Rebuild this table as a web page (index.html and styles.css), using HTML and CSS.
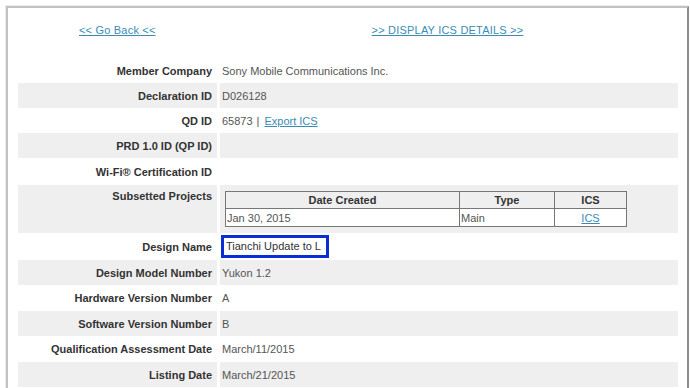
FILE: index.html
```html
<!DOCTYPE html>
<html>
<head>
<meta charset="utf-8">
<link rel="stylesheet" href="styles.css">
</head>
<body>
<div class="frame">
  <div class="toplinks">
    <a href="#">&lt;&lt; Go Back &lt;&lt;</a>
    <a href="#">&gt;&gt; DISPLAY ICS DETAILS &gt;&gt;</a>
  </div>
  <div class="details">
    <div class="row h25"><div class="lbl">Member Company</div><div class="val">Sony Mobile Communications Inc.</div></div>
    <div class="row h25 alt"><div class="lbl">Declaration ID</div><div class="val">D026128</div></div>
    <div class="row h25"><div class="lbl">QD ID</div><div class="val">65873<span class="sep">|</span><a href="#">Export ICS</a></div></div>
    <div class="row h25 alt"><div class="lbl">PRD 1.0 ID (QP ID)</div><div class="val"></div></div>
    <div class="row h27"><div class="lbl">Wi-Fi® Certification ID</div><div class="val"></div></div>
    <div class="row sub alt"><div class="lbl top">Subsetted Projects</div>
      <div class="val">
        <table class="proj">
          <tr><th class="c1">Date Created</th><th class="c2">Type</th><th class="c3">ICS</th></tr>
          <tr><td>Jan 30, 2015</td><td>Main</td><td class="ctr"><a href="#">ICS</a></td></tr>
        </table>
      </div>
    </div>
    <div class="row h27"><div class="lbl">Design Name</div><div class="val"><span class="mark">Tianchi Update to L</span></div></div>
    <div class="row h25 alt"><div class="lbl">Design Model Number</div><div class="val">Yukon 1.2</div></div>
    <div class="row h26"><div class="lbl">Hardware Version Number</div><div class="val">A</div></div>
    <div class="row h25 alt"><div class="lbl">Software Version Number</div><div class="val">B</div></div>
    <div class="row h26"><div class="lbl">Qualification Assessment Date</div><div class="val">March/11/2015</div></div>
    <div class="row h25 alt"><div class="lbl">Listing Date</div><div class="val">March/21/2015</div></div>
  </div>
</div>
</body>
</html>
```
FILE: styles.css
```css
html, body {
  margin: 0;
  padding: 0;
  background: #ffffff;
}
body {
  font-family: "Liberation Sans", Arial, sans-serif;
  font-size: 11px;
  color: #555555;
}
.frame {
  margin: 6px 0 0 6px;
  width: 660px;
  height: 420px;
  border-top: 2px solid #c2c2c2;
  border-left: 2px solid #c2c2c2;
  border-right: 2px solid #8c8c8c;
  padding: 0 9px 0 10px;
  box-shadow: -1px -1px 0 #ececec;
}
a {
  color: #3a8cb4;
  text-decoration: underline;
}
.toplinks {
  height: 50px;
  box-sizing: border-box;
  padding: 15px 0 0 61px;
  display: flex;
  gap: 216px;
  line-height: 14px;
  letter-spacing: 0.2px;
}
.row {
  display: grid;
  grid-template-columns: 199px 1fr;
  column-gap: 3px;
}
.h25 { height: 25px; }
.h26 { height: 26px; }
.h27 { height: 27px; }
.sub { height: 48px; }
.row > div {
  display: flex;
  align-items: center;
}
.row.alt > div {
  background: #efefef;
}
.lbl {
  justify-content: flex-end;
  padding-right: 5px;
  font-weight: bold;
  color: #333333;
}
.val {
  padding-left: 2px;
}
.sep {
  margin: 0 5px 0 4px;
}
.row > .lbl.top {
  align-items: flex-start;
  padding-top: 5px;
}
.proj {
  border-collapse: collapse;
  margin-left: 3px;
  border: 1px solid #2a2a2a;
  width: 402px;
  font-size: 11px;
  color: #555555;
}
.proj th, .proj td {
  border: 1px solid #777777;
  padding: 0 1px;
  height: 16px;
  line-height: 14px;
}
.proj th {
  color: #333333;
  font-weight: bold;
  text-align: center;
}
.proj td {
  background: #ffffff;
  height: 17px;
}
.proj .c1 { width: 231px; }
.proj .c2 { width: 92px; }
.proj .ctr { text-align: center; }
.mark {
  display: inline-block;
  border: 3px solid #0a2ed6;
  padding: 2px 5px 2px 2px;
  margin-left: -1px;
  line-height: 13px;
  color: #333333;
  background: #ffffff;
}
```
